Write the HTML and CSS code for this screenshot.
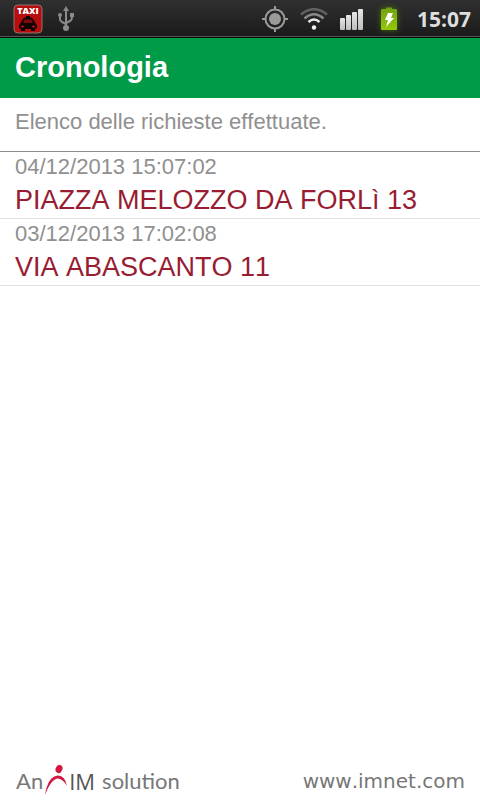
FILE: index.html
```html
<!DOCTYPE html>
<html lang="it">
<head>
<meta charset="utf-8">
<meta name="viewport" content="width=device-width, initial-scale=1">
<title>Cronologia</title>
<link rel="stylesheet" href="styles.css">
</head>
<body>
<div class="status">
  <div class="status-group status-left">
    <svg class="icon" width="30" height="30" viewBox="0 0 30 30" aria-hidden="true">
      <rect x="1" y="1" width="28" height="28" rx="4" fill="#b80c0f" stroke="#8d7770" stroke-width="1"/>
      <path d="M7 20l3-5q.5-1.500 2-1.500h1V12h4v1.500h1q1.500 0 2 1.500l3 5 1 1.500v3h-2V27h-4v-2h-6v2H8v-2.500H6v-3z" fill="#120303"/>
      <path d="M11.500 15.500h7l1.500 3.500h-10z" fill="#7d0a0c"/>
      <circle cx="9.500" cy="22.500" r="1.200" fill="#c01518"/><circle cx="20.500" cy="22.500" r="1.200" fill="#c01518"/>
      <text class="taxi" x="15" y="10" text-anchor="middle">TAXI</text>
    </svg>
    <svg class="icon" width="18" height="26" viewBox="0 0 18 26" fill="none" stroke="#8b8b8b" stroke-width="2" aria-hidden="true">
      <path d="M9 4v18M3 9v4q0 2 2 3l4 2M15 9v2q0 3-2 4l-4 2"/>
      <path d="M9 0l3 5H6zM13 7h4v4h-4z" fill="#8b8b8b" stroke="none"/>
      <circle cx="3" cy="9" r="2" fill="#8b8b8b" stroke="none"/><circle cx="9" cy="22" r="3" fill="#8b8b8b" stroke="none"/>
    </svg>
  </div>
  <div class="status-group status-right">
    <svg class="icon" width="26" height="26" viewBox="0 0 26 26" fill="none" stroke="#9a9a98" stroke-width="2" aria-hidden="true">
      <circle cx="13" cy="13" r="9.500"/><circle cx="13" cy="13" r="6" fill="#9a9a98" stroke="none"/>
      <path d="M13 0v4M13 22v4M0 13h4M22 13h4"/>
    </svg>
    <svg class="icon" width="28" height="22" viewBox="0 0 28 22" fill="none" stroke-width="2.500" aria-hidden="true">
      <path d="M1 6.500Q14-4 27 6.500" stroke="#636363"/><path d="M4.500 10.500Q14 2 23.500 10.500" stroke="#8a8a8a"/>
      <path d="M8.500 14Q14 9 19.500 14" stroke="#e8e8e8"/><circle cx="14" cy="19.500" r="2.200" fill="#f2f2f2"/>
    </svg>
    <svg class="icon" width="24" height="22" viewBox="0 0 24 22" aria-hidden="true">
      <defs><linearGradient id="bar" x2="0" y2="1"><stop stop-color="#e6e6e6"/><stop offset="1" stop-color="#bdbdbd"/></linearGradient></defs>
      <g fill="url(#bar)"><rect y="10" width="5" height="12" rx="1"/><rect x="6" y="7" width="5" height="15" rx="1"/><rect x="12" y="4" width="5" height="18" rx="1"/><rect x="18" y="1" width="5" height="21" rx="1"/></g>
    </svg>
    <svg class="icon battery" width="16" height="24" viewBox="0 0 16 24" aria-hidden="true">
      <defs><linearGradient id="cell" x2="0" y2="1"><stop stop-color="#6fa012"/><stop offset="1" stop-color="#95c80a"/></linearGradient></defs>
      <path d="M1 2h4V.500h6V2h4q1 0 1 1v19q0 1-1 1H1q-1 0-1-1V3q0-1 1-1z" fill="url(#cell)"/>
      <path d="M7 6h5l-2 5h3L5 20l2-7H4z" fill="#fff"/>
    </svg>
    <time class="clock">15:07</time>
  </div>
</div>
<header class="title-bar"><h1>Cronologia</h1></header>
<main>
  <p class="intro">Elenco delle richieste effettuate.</p>
  <ul class="history">
    <li><time class="date">04/12/2013 15:07:02</time><span class="address">PIAZZA MELOZZO DA FORLì 13</span></li>
    <li><time class="date">03/12/2013 17:02:08</time><span class="address">VIA ABASCANTO 11</span></li>
  </ul>
</main>
<footer class="footer">
  <div class="brand">
    <span>An</span>
    <svg class="figure" width="24" height="32" viewBox="0 0 24 32" fill="#d31840" aria-hidden="true">
      <ellipse cx="14" cy="5" rx="3.300" ry="4.200" transform="rotate(25 14 5)"/>
      <path d="M0 31Q3 12 13 11.500q7 0 9 10.500-4-7-9-7.500Q6 15 0 31z"/>
    </svg>
    <span class="im">IM</span>
    <span class="solution">solution</span>
  </div>
  <span class="site">www.imnet.com</span>
</footer>
</body>
</html>
```
FILE: styles.css
```css
* { box-sizing: border-box; }

body {
  margin: 0;
  min-height: 100vh;
  display: flex;
  flex-direction: column;
  background: #fff;
  color: #909090;
  font-family: "Liberation Sans", Arial, sans-serif;
  font-kerning: none;
}

.status {
  height: 38px;
  padding: 0 9px 0 13px;
  display: flex;
  justify-content: space-between;
  align-items: center;
  background: linear-gradient(#303030, #1b1b1b 94%, #555 94%, #555 97%, #080808 97%);
}

.status-group { display: flex; align-items: center; }
.status-left { gap: 14px; }
.status-right { gap: 12px; }
.icon { display: block; flex: none; }
.battery { margin-left: 5px; filter: drop-shadow(0 0 3px #4b6d16); }

.taxi {
  font: 900 9px "Open Sans", sans-serif;
  fill: #fff;
}

.clock {
  margin-left: 8px;
  font: 700 21px/38px "Open Sans", sans-serif;
  color: #dedede;
}

.title-bar {
  padding: 0 15px 2px;
  background: #009b48;
  color: #fff;
}

h1 {
  margin: 0;
  font-size: 29px;
  line-height: 58px;
}

main { flex: 1; }

.intro {
  margin: 0;
  padding: 12px 15px 17px;
  border-bottom: 1px solid #8c8c8c;
  font-size: 22px;
  line-height: 24px;
}

.history {
  margin: 0;
  padding: 0;
  list-style: none;
}

.history li {
  padding: 3px 15px 2px;
  border-bottom: 1px solid #e1e1e1;
}

.date, .address { display: block; }

.date {
  font-size: 22px;
  line-height: 24px;
}

.address {
  padding-top: 5px;
  font-size: 27px;
  line-height: 32px;
  color: #981c32;
}

.footer {
  padding: 0 15px 4px 16px;
  display: flex;
  justify-content: space-between;
  align-items: flex-end;
  color: #777;
  line-height: 30px;
}

.brand {
  display: flex;
  align-items: flex-end;
  font-family: Lato, sans-serif;
  font-size: 22px;
}

.figure { margin-left: 2px; }

.im {
  font-family: "Open Sans", sans-serif;
  color: #555;
}

.solution { margin-left: 7px; }

.site {
  font-family: "DejaVu Sans", sans-serif;
  font-size: 20px;
}
```
